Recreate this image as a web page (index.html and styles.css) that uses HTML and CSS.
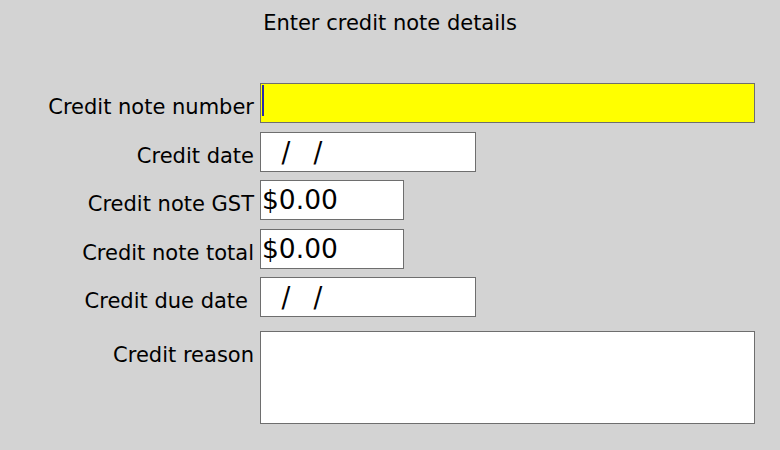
FILE: index.html
```html
<!DOCTYPE html>
<html>
<head>
<meta charset="utf-8">
<link rel="stylesheet" href="styles.css">
</head>
<body>
<div class="page">
  <h1 class="title">Enter credit note details</h1>
  <div class="form">
    <div class="row first">
      <div class="label">Credit note number</div>
      <div class="field wide active"><span class="caret"></span></div>
    </div>
    <div class="row">
      <div class="label">Credit date</div>
      <div class="field date"><span class="slashes"><span class="sl">/</span><span class="sl">/</span></span></div>
    </div>
    <div class="row tight">
      <div class="label">Credit note GST</div>
      <div class="field money"><span class="val">$0.00</span></div>
    </div>
    <div class="row">
      <div class="label">Credit note total</div>
      <div class="field money"><span class="val">$0.00</span></div>
    </div>
    <div class="row tight">
      <div class="label due">Credit due date</div>
      <div class="field date"><span class="slashes"><span class="sl">/</span><span class="sl">/</span></span></div>
    </div>
    <div class="row reason">
      <div class="label">Credit reason</div>
      <div class="field wide area"></div>
    </div>
  </div>
</div>
</body>
</html>
```
FILE: styles.css
```css
html, body {
  margin: 0;
  padding: 0;
  background: #d3d3d3;
}
body {
  width: 780px;
  height: 450px;
  overflow: hidden;
  font-family: "DejaVu Sans", Verdana, sans-serif;
  color: #000;
}
.page {
  padding-top: 11px;
}
.title {
  margin: 0;
  font-size: 21px;
  font-weight: normal;
  line-height: 24px;
  text-align: center;
}
.form {
  display: flex;
  flex-direction: column;
  margin-top: 48px;
}
.row {
  display: flex;
  align-items: flex-start;
  margin-top: 9px;
  height: 40px;
}
.row.first {
  margin-top: 0;
}
.row.tight {
  margin-top: 8px;
}
.row.reason {
  margin-top: 14px;
  height: 93px;
}
.label {
  box-sizing: border-box;
  flex: none;
  width: 260px;
  padding-right: 6px;
  text-align: right;
  font-size: 21px;
  line-height: 40px;
  padding-top: 4px;
  white-space: nowrap;
}
.label.due {
  padding-right: 12px;
}
.field {
  box-sizing: border-box;
  height: 40px;
  background: #fff;
  border: 1px solid #6e6e6e;
  position: relative;
  overflow: hidden;
}
.field.wide {
  width: 495px;
}
.field.date {
  width: 216px;
}
.field.money {
  width: 144px;
}
.field.area {
  height: 93px;
}
.field.active {
  background: #ffff00;
}
.caret {
  position: absolute;
  left: 1px;
  top: 1px;
  width: 2px;
  height: 31px;
  background: #2a2aa8;
}
.val {
  display: block;
  padding-left: 1px;
  padding-top: 2px;
  font-size: 26.5px;
  line-height: 34px;
  white-space: pre;
}
.slashes {
  display: flex;
  gap: 22px;
  padding-left: 20px;
  padding-top: 2px;
}
.sl {
  display: block;
  font-size: 29px;
  line-height: 34px;
  transform: scaleX(0.9);
}
```
